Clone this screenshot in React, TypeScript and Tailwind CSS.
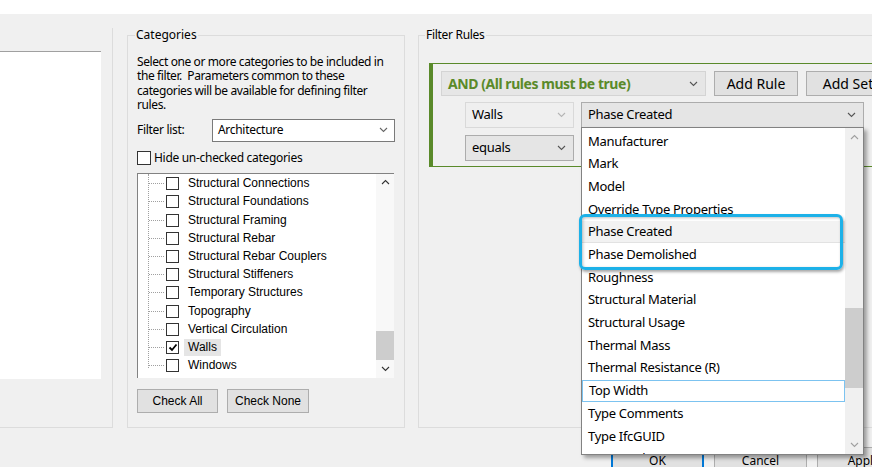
import React from 'react';

const treeItems = [
  'Structural Connections',
  'Structural Foundations',
  'Structural Framing',
  'Structural Rebar',
  'Structural Rebar Couplers',
  'Structural Stiffeners',
  'Temporary Structures',
  'Topography',
  'Vertical Circulation',
  'Walls',
  'Windows',
];

const params = [
  'Manufacturer',
  'Mark',
  'Model',
  'Override Type Properties',
  'Phase Created',
  'Phase Demolished',
  'Roughness',
  'Structural Material',
  'Structural Usage',
  'Thermal Mass',
  'Thermal Resistance (R)',
  'Top Width',
  'Type Comments',
  'Type IfcGUID',
  'Type Mark',
];

function Chevron({ up, color = '#555' }: { up?: boolean; color?: string }) {
  return (
    <svg width="9" height="6" viewBox="0 0 9 6" className="shrink-0">
      <path d={up ? 'M1 5L4.5 1.5L8 5' : 'M1 1L4.5 4.5L8 1'} fill="none" stroke={color} strokeWidth="1.1" />
    </svg>
  );
}

function Combo({ label, className, chevron = '#555', textClass = '' }: { label: string; className: string; chevron?: string; textClass?: string }) {
  return (
    <div className={`flex shrink-0 items-center justify-between border pl-[6px] pr-[7px] ${className}`}>
      <span className={textClass}>{label}</span>
      <Chevron color={chevron} />
    </div>
  );
}

function WinButton({ label, className = '' }: { label: string; className?: string }) {
  return (
    <div className={`flex shrink-0 items-center justify-center border border-[#adadad] bg-[#e1e1e1] ${className}`}>{label}</div>
  );
}

export default function App() {
  return (
    <div className="relative w-[872px] h-[467px] overflow-hidden bg-[#f0f0f0] font-['Noto_Sans',sans-serif] text-black">
      <div className="h-[14px] bg-white" />

      <div className="flex h-[414px] pt-[14px]">
        {/* left group (mostly off screen) */}
        <div className="w-[113px] h-[400px] shrink-0 pt-[7px] border-r border-b border-[#dcdcdc]">
          <div className="mt-[16px] w-[101px] h-[328px] bg-white border-t border-[#a0a0a0]" />
        </div>

        {/* Categories */}
        <fieldset className="ml-[14px] w-[278px] h-[400px] shrink-0 border border-[#dcdcdc] px-[9px]">
          <legend className="ml-[-2px] px-[1px] text-[12px] leading-[14px]">Categories</legend>
          <p className="mt-[13px] text-[12px] leading-[14.4px] whitespace-pre tracking-[-0.4px]">
            {'Select one or more categories to be included in\nthe filter.  Parameters common to these\ncategories will be available for defining filter\nrules.'}
          </p>
          <div className="mt-[6px] flex h-[23px] items-center text-[12px] tracking-[-0.3px]">
            <span className="w-[75px]">Filter list:</span>
            <div className="flex h-[23px] w-[183px] items-center justify-between border border-[#7a7a7a] bg-white pl-[5px] pr-[6px]">
              <span>Architecture</span>
              <Chevron color="#666" />
            </div>
          </div>
          <div className="mt-[10px] flex h-[13px] items-center text-[12px] tracking-[-0.3px]">
            <div className="w-[14px] h-[14px] border border-[#333] bg-white" />
            <span className="ml-[3px]">Hide un-checked categories</span>
          </div>

          <div className="mt-[8px] flex h-[205px] w-[257px] border-t border-l border-[#828282] bg-white font-['Liberation_Sans',sans-serif] text-[12px]">
            <div className="relative flex-1 pt-[1px]">
              <div className="absolute left-[10px] top-0 h-[194px] border-l border-dotted border-[#a0a0a0]" />
              {treeItems.map((item) => (
                <div key={item} className="flex h-[18.2px] items-center">
                  <div className="ml-[11px] w-[15px] border-t border-dotted border-[#a0a0a0]" />
                  <div className="ml-[2px] flex w-[13px] h-[13px] items-center justify-center border border-[#333] bg-white">
                    {item === 'Walls' && (
                      <svg width="10" height="9" viewBox="0 0 10 9">
                        <path d="M1.5 4.5L4 7L8.5 1.5" fill="none" stroke="#000" strokeWidth="1.8" />
                      </svg>
                    )}
                  </div>
                  <span className={`ml-[5px] px-[4px] leading-[17px] ${item === 'Walls' ? 'bg-[#e5e5e5]' : ''}`}>{item}</span>
                </div>
              ))}
            </div>
            <div className="flex w-[18px] flex-col items-center bg-[#f8f8f8]">
              <div className="flex h-[18px] items-center"><Chevron up color="#333" /></div>
              <div className="flex-1 w-full pt-[140px]">
                <div className="h-[29px] w-full bg-[#cdcdcd]" />
              </div>
              <div className="flex h-[18px] items-center"><Chevron color="#333" /></div>
            </div>
          </div>

          <div className="mt-[11px] flex gap-[9px] font-['Liberation_Sans',sans-serif] text-[12px]">
            <WinButton label="Check All" className="w-[81px] h-[24px]" />
            <WinButton label="Check None" className="w-[82px] h-[24px]" />
          </div>
        </fieldset>

        {/* Filter Rules */}
        <fieldset className="ml-[13px] w-[480px] h-[400px] shrink-0 border border-[#dcdcdc] pl-[10px]">
          <legend className="ml-[-4px] px-[1px] text-[12px] leading-[14px] tracking-[-0.3px]">Filter Rules</legend>
          <div className="mt-[21px] h-[104px] border-l-[4px] border-t border-b border-[#5a8a2a] pl-[8px] pt-[7px] text-[14px]">
            <div className="flex gap-[8px]">
              <Combo
                label="AND (All rules must be true)"
                className="w-[265px] h-[25px] border-[#d4d4d4] bg-[#e6e6e6]"
                textClass="font-bold text-[#5a8a2a] tracking-[-0.45px]"
              />
              <WinButton label="Add Rule" className="w-[84px] h-[25px]" />
              <WinButton label="Add Set" className="w-[84px] h-[25px]" />
            </div>
            <div className="mt-[6px] ml-[24px] flex gap-[7px] text-[13px] tracking-[-0.3px]">
              <Combo label="Walls" className="w-[109px] h-[26px] border-[#d9d9d9] bg-[#efefef]" chevron="#b5b5b5" />
              <Combo label="Phase Created" className="w-[283px] h-[26px] border-[#acacac] bg-[#e5e5e5]" />
            </div>
            <div className="mt-[7px] ml-[24px] flex text-[13px] tracking-[-0.3px]">
              <Combo label="equals" className="w-[109px] h-[26px] border-[#acacac] bg-[#e5e5e5]" />
            </div>
          </div>
        </fieldset>
      </div>

      {/* dialog buttons */}
      <div className="flex gap-[10px] pl-[611px] pt-[19px] text-[12px]">
        <div className="flex w-[93px] h-[28px] shrink-0 items-center justify-center border-2 border-[#0078d7] bg-[#e1e1e1]">OK</div>
        <WinButton label="Cancel" className="w-[93px] h-[28px]" />
        <WinButton label="Apply" className="w-[93px] h-[28px]" />
      </div>

      {/* open dropdown list */}
      <div className="absolute left-[581px] top-[127px] flex w-[283px] h-[328px] border border-[#828282] bg-white shadow-[3px_3px_4px_rgba(0,0,0,0.35)] text-[13px]">
        <div className="flex-1 overflow-hidden pt-[2px]">
          {params.map((p) => (
            <div
              key={p}
              className={`flex h-[22.7px] items-center pl-[6px] tracking-[-0.3px] ${p === 'Phase Created' ? 'bg-[#f2f2f2] border-b border-[#e2e2e2]' : ''} ${p === 'Top Width' ? 'border border-[#7cc3f0] pl-[5px]' : ''}`}
            >
              {p}
            </div>
          ))}
        </div>
        <div className="flex w-[18px] flex-col items-center bg-[#f0f0f0]">
          <div className="flex h-[18px] items-center"><Chevron up color="#a0a0a0" /></div>
          <div className="flex-1 w-full pt-[162px]">
            <div className="h-[80px] w-full bg-[#cdcdcd]" />
          </div>
          <div className="flex h-[18px] items-center"><Chevron color="#a0a0a0" /></div>
        </div>
      </div>

      {/* annotation highlight */}
      <div className="absolute left-[579px] top-[214px] w-[264px] h-[56px] rounded-[6px] border-[3px] border-[#1db1e8] shadow-[1px_2px_3px_rgba(0,0,0,0.35),inset_1px_1px_3px_rgba(0,0,0,0.25)]" />
    </div>
  );
}
